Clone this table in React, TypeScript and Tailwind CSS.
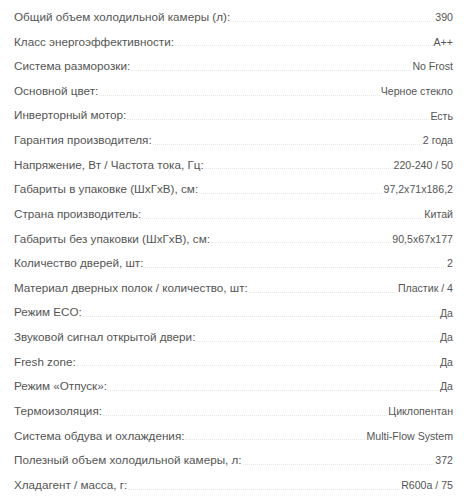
const specs: [string, string][] = [
	["Общий объем холодильной камеры (л):", "390"],
	["Класс энергоэффективности:", "A++"],
	["Система разморозки:", "No Frost"],
	["Основной цвет:", "Черное стекло"],
	["Инверторный мотор:", "Есть"],
	["Гарантия производителя:", "2 года"],
	["Напряжение, Вт / Частота тока, Гц:", "220-240 / 50"],
	["Габариты в упаковке (ШхГхВ), см:", "97,2x71x186,2"],
	["Страна производитель:", "Китай"],
	["Габариты без упаковки (ШхГхВ), см:", "90,5x67x177"],
	["Количество дверей, шт:", "2"],
	["Материал дверных полок / количество, шт:", "Пластик / 4"],
	["Режим ECO:", "Да"],
	["Звуковой сигнал открытой двери:", "Да"],
	["Fresh zone:", "Да"],
	["Режим «Отпуск»:", "Да"],
	["Термоизоляция:", "Циклопентан"],
	["Система обдува и охлаждения:", "Multi-Flow System"],
	["Полезный объем холодильной камеры, л:", "372"],
	["Хладагент / масса, г:", "R600a / 75"],
]

const Row = ({ label, value }: { label: string; value: string }) => (
	<div className="flex items-end h-[24.63px]">
		<span className="text-[11.7px] leading-none text-[#555] whitespace-nowrap">{label}</span>
		<span className="flex-1 border-b border-dotted border-[#e6e6e6] mb-[1px] mx-[1px]" />
		<span className="text-[10.6px] leading-none text-[#555] whitespace-nowrap">{value}</span>
	</div>
)

const App = () => {
	return (
		<div className="w-[464px] h-[500px] bg-white overflow-hidden pl-[14px] pr-[11px] font-['Liberation_Sans',Arial,sans-serif]">
			<div className="flex flex-col -mt-[2px]">
				{specs.map(([label, value]) => (
					<Row key={label} label={label} value={value} />
				))}
			</div>
		</div>
	)
}

export default App
